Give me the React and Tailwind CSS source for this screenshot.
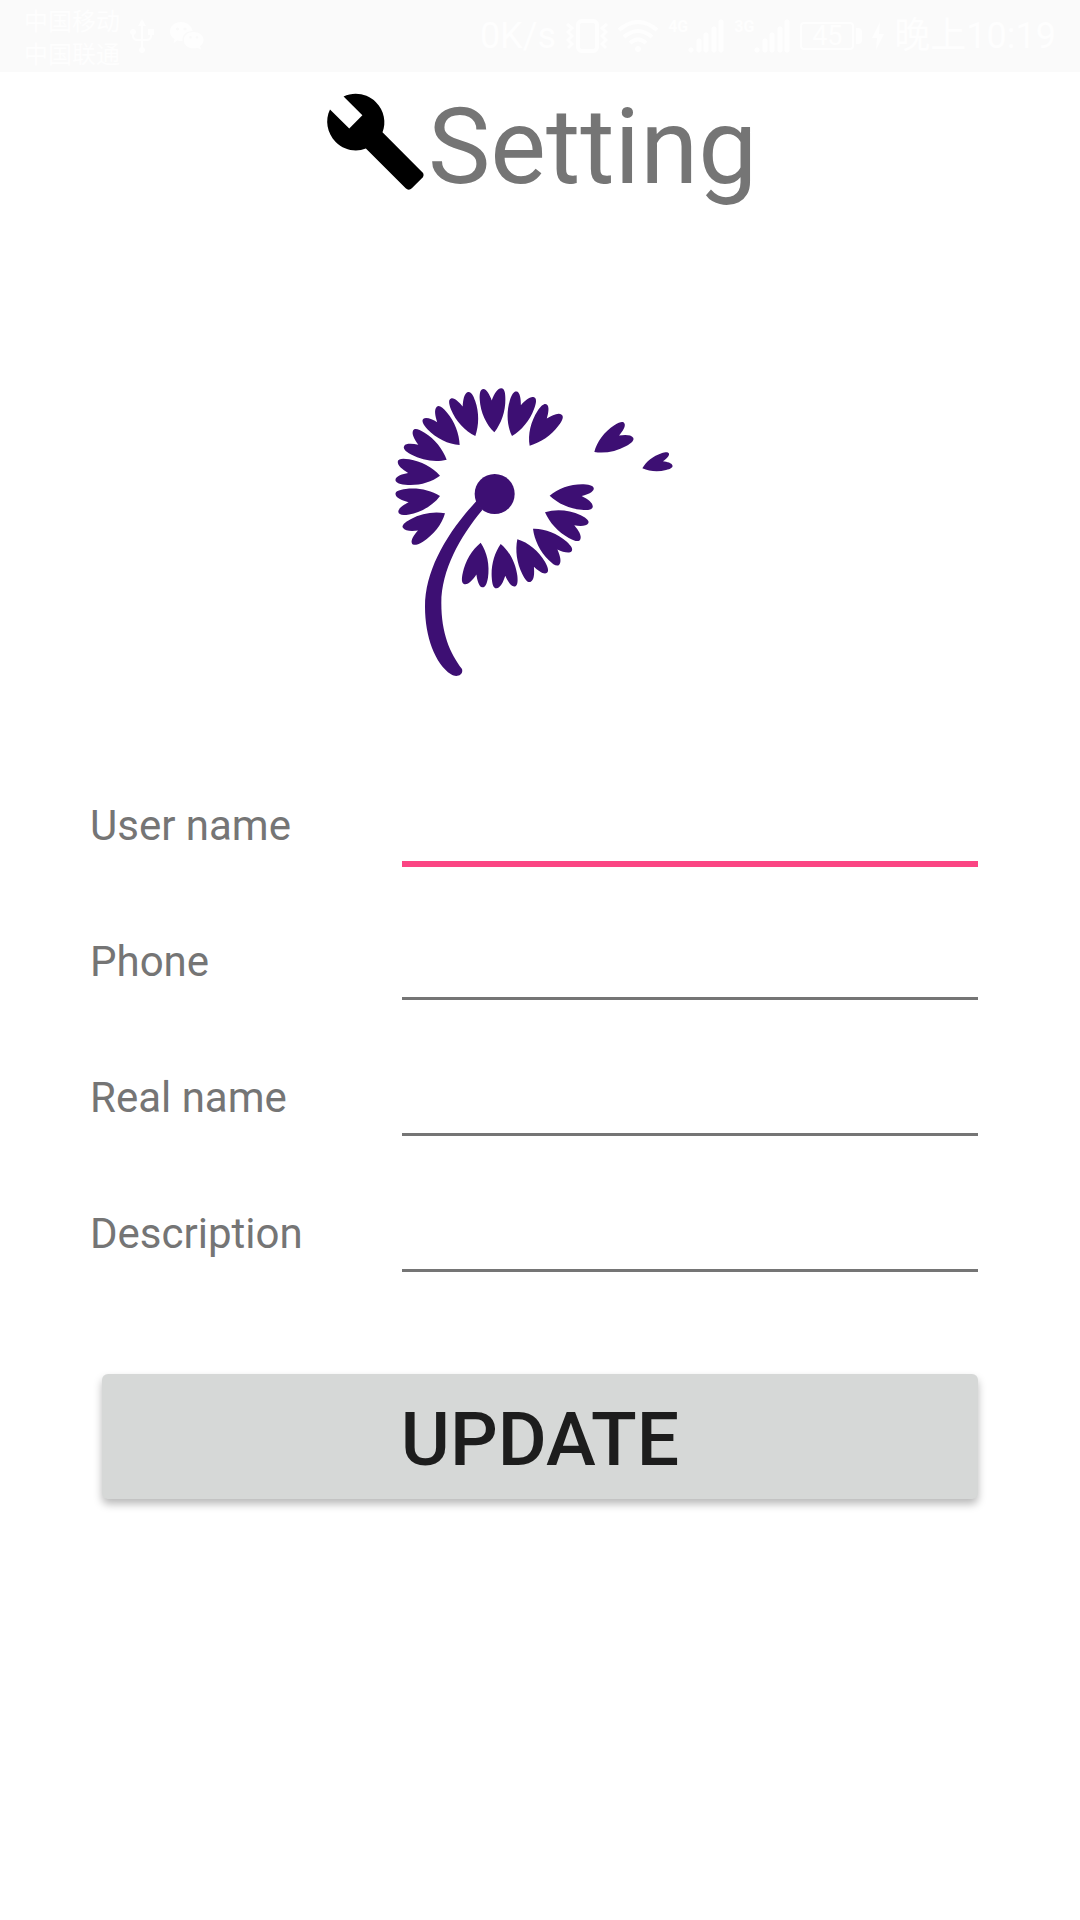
import { MdBuild } from "react-icons/md";

const PETAL =
  "M0 0C-24-24-39-62-40-100C-40-122-36-131-28-131C-18-131-9-112-4-96C4-114 14-131 26-131C35-131 38-118 37-98C36-62 22-26 0 0Z";

// [tip x, tip y, crown x, crown y, scale]
const PETALS = [
  [343, 187, 338, 60, 1],
  [396, 198, 436, 78, 1],
  [449, 227, 521, 123, 1],
  [286, 198, 241, 80, 1],
  [239, 225, 154, 131, 1],
  [200, 269, 91, 206, 1],
  [180, 317, 55, 301, 1],
  [180, 378, 55, 398, 1],
  [195, 430, 87, 493, 1],
  [302, 518, 280, 642, 1],
  [362, 522, 375, 648, 1],
  [412, 508, 473, 619, 1],
  [459, 476, 551, 561, 1],
  [495, 427, 608, 483, 1],
  [509, 377, 635, 384, 1],
  [643, 246, 746, 183, 0.93],
  [787, 295, 871, 270, 0.68],
];

function Dandelion() {
  return (
    <svg viewBox="0 0 960 960" className="h-80 w-80" fill="#3d0f73" role="img" aria-label="Dandelion">
      {PETALS.map(([x, y, cx, cy, s]) => {
        const angle = (Math.atan2(cy - y, cx - x) * 180) / Math.PI + 90;
        return <path key={`${x}-${y}`} d={PETAL} transform={`translate(${x} ${y}) rotate(${angle}) scale(${s})`} />;
      })}
      <circle cx="344" cy="372" r="60" />
      <path d="M290 392C200 490 135 600 135 710C135 800 165 880 213 913C230 924 251 915 246 897C210 850 184 790 184 700C184 600 240 500 307 420Z" />
    </svg>
  );
}

function UsbIcon() {
  return (
    <svg viewBox="0 0 24 34" className="h-[34px] w-6" fill="currentColor" aria-hidden="true">
      <path d="M12 0l4 7h-8z" />
      <circle cx="12" cy="31" r="3" />
      <circle cx="3" cy="13" r="3" />
      <path d="M18 10h6v6h-6z" />
      <path d="M12 5v24M3 13v4q0 4 5 4h8q5 0 5-4v-4" fill="none" stroke="currentColor" strokeWidth="2" />
    </svg>
  );
}

function WeChatIcon() {
  return (
    <svg viewBox="0 0 34 28" className="h-7 w-[34px]" fill="currentColor" aria-hidden="true">
      <path
        fillRule="evenodd"
        d="M11 0C17 0 22 4 22.500 9C16 9 12 13 12.500 19C11 19.300 9 19 7.500 18.500L3.500 21L4.500 17C1.500 15 0 12.500 0 9.500C0 4 5 0 11 0ZM7.500 5.500a1.500 1.500 0 1 0 .01 0ZM15 5.500a1.500 1.500 0 1 0 .01 0Z"
      />
      <path
        fillRule="evenodd"
        d="M23.500 10C29 10 33.500 13.500 33.500 18C33.500 20.500 32 22.800 30 24.300L31 27.500L27.500 25.700C20 28 13.800 24 13.800 18C13.800 13.500 18 10 23.500 10ZM20.500 14a1.300 1.300 0 1 0 .01 0ZM27 14a1.300 1.300 0 1 0 .01 0Z"
      />
    </svg>
  );
}

function VibrateIcon() {
  return (
    <svg viewBox="0 0 42 34" className="h-[34px] w-[42px]" fill="none" stroke="currentColor" aria-hidden="true">
      <rect x="12" y="2" width="19" height="30" rx="4" strokeWidth="4" />
      <path d="M1 5l5 4-4 4 4 4-4 4 4 4-4 4M41 5l-5 4 4 4-4 4 4 4-4 4 4 4" strokeWidth="3" />
    </svg>
  );
}

function WifiIcon() {
  return (
    <svg viewBox="0 0 40 32" className="h-8 w-10" fill="none" stroke="currentColor" strokeWidth="4" aria-hidden="true">
      <path d="M1 10Q20-6 39 10M6 17Q20 5 34 17M12 23Q20 16 28 23" />
      <circle cx="20" cy="29" r="3" fill="currentColor" stroke="none" />
    </svg>
  );
}

function Signal({ label }) {
  return (
    <div className="flex h-[34px] items-start">
      <span className="text-base leading-4 font-bold">{label}</span>
      <svg viewBox="0 0 36 34" className="h-[34px] w-9" stroke="currentColor" strokeWidth="5" strokeLinecap="round" aria-hidden="true">
        <path d="M3 31v0M11 31v-9M18 31v-15M26 31v-21M33 31v-28" />
      </svg>
    </div>
  );
}

function StatusBar() {
  return (
    <header className="flex h-[72px] items-center justify-between bg-[#fafafa] px-6 text-[#fefefe]">
      <div className="flex items-center">
        <div className="mr-2.5 pt-1.5 text-2xl leading-[33px]">
          <div>中国移动</div>
          <div>中国联通</div>
        </div>
        <UsbIcon />
        <div className="ml-4">
          <WeChatIcon />
        </div>
      </div>
      <div className="flex items-center gap-2.5 text-4xl leading-10">
        <span>0K/s</span>
        <VibrateIcon />
        <WifiIcon />
        <Signal label="4G" />
        <Signal label="3G" />
        <div className="flex items-center">
          <div className="flex h-7 w-[54px] items-center justify-center rounded border-2 border-[#fefefe] text-[27px]">45</div>
          <div className="ml-0.5 h-4 w-1.5 rounded-r bg-[#fefefe]" />
        </div>
        <svg viewBox="0 0 12 28" className="h-7 w-3" fill="currentColor" aria-hidden="true">
          <path d="M8 0L0 16h5L4 28l8-16H7z" />
        </svg>
        <time>晚上10:19</time>
      </div>
    </header>
  );
}

function Field({ id, label, active }) {
  return (
    <div className="flex h-[136px] items-start">
      <label htmlFor={id} className="w-1/3 pt-5 text-[42px] leading-[49px] text-[#757575]">
        {label}
      </label>
      <div className="w-2/3 px-3">
        <input
          id={id}
          name={id}
          type="text"
          className={
            active
              ? "block h-[86px] w-full border-b-6 border-[#fb4583] bg-transparent text-[42px] text-[#212121] outline-none"
              : "block h-[83px] w-full border-b-3 border-[#757575] bg-transparent text-[42px] text-[#212121] outline-none"
          }
        />
      </div>
    </div>
  );
}

export default function App() {
  return (
    <div className="min-h-screen bg-white font-[Roboto,'Noto_Sans_CJK_SC',sans-serif]">
      <StatusBar />
      <main>
        <div className="flex h-[140px] items-start justify-center pt-3.5">
          <MdBuild className="mt-[3px] size-[105px] text-black" aria-hidden="true" />
          <h1 className="text-[105px] leading-[123px] text-[#757575]">Setting</h1>
        </div>
        <div className="mt-[158px] flex justify-center">
          <Dandelion />
        </div>
        <form className="mt-[91px] px-[90px]" onSubmit={(e) => e.preventDefault()}>
          <Field id="username" label="User name" active />
          <Field id="phone" label="Phone" />
          <Field id="realname" label="Real name" />
          <Field id="description" label="Description" />
          <div className="px-3 pt-[49px]">
            <button
              type="submit"
              className="flex h-[125px] w-full items-center justify-center rounded-md bg-[#d6d8d7] pt-1 text-[75px] leading-[88px] font-medium text-[#1d1d1d] shadow-[0_5px_8px_rgba(0,0,0,0.28)]"
            >
              UPDATE
            </button>
          </div>
        </form>
      </main>
    </div>
  );
}
